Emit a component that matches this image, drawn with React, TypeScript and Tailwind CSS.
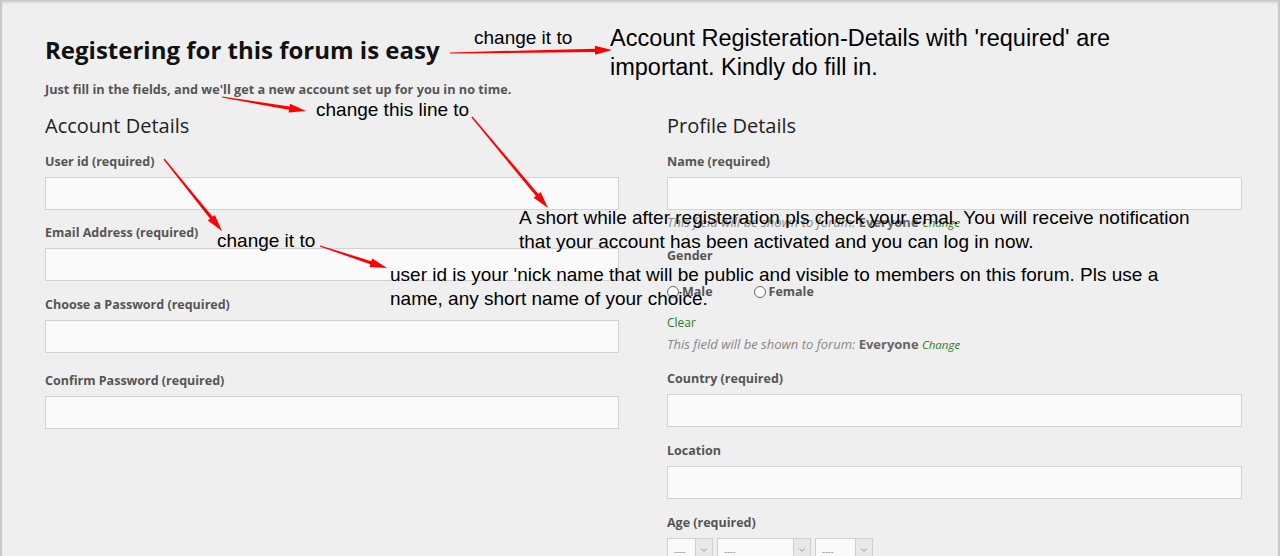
import React from "react";
import { ChevronDown } from "lucide-react";

const formFont = { fontFamily: '"Open Sans", "DejaVu Sans", sans-serif' };
const noteFont = { fontFamily: '"Liberation Sans", Arial, sans-serif' };

// red annotation arrow, tapered shaft with a triangle head
const Arrow = ({ x1, y1, x2, y2 }: { x1: number; y1: number; x2: number; y2: number }) => {
  const dx = x2 - x1;
  const dy = y2 - y1;
  const len = Math.sqrt(dx * dx + dy * dy);
  const ux = dx / len;
  const uy = dy / len;
  const nx = -uy;
  const ny = ux;
  const head = 17;
  const bx = x2 - ux * head;
  const by = y2 - uy * head;
  const p = (x: number, y: number) => `${x.toFixed(1)},${y.toFixed(1)}`;
  const pts = [
    p(x1 + nx * 0.6, y1 + ny * 0.6),
    p(bx + nx * 1.6, by + ny * 1.6),
    p(bx + nx * 4.5, by + ny * 4.5),
    p(x2, y2),
    p(bx - nx * 4.5, by - ny * 4.5),
    p(bx - nx * 1.6, by - ny * 1.6),
    p(x1 - nx * 0.6, y1 - ny * 0.6),
  ].join(" ");
  return <polygon points={pts} fill="#ff0000" />;
};

const Label = ({ children, className = "" }: { children: React.ReactNode; className?: string }) => (
  <div className={`text-[12.5px] font-bold leading-[14px] text-[#555] ${className}`}>{children}</div>
);

const TextBox = ({ className = "" }: { className?: string }) => (
  <div className={`h-[33px] w-full border border-[#d2d2d2] bg-[#fafafa] ${className}`} />
);

const Visibility = ({ className = "" }: { className?: string }) => (
  <div className={`h-[14px] text-[13px] leading-[14px] ${className}`}>
    <span className="italic text-[#888]">This field will be shown to forum: </span>
    <span className="font-bold text-[#666]">Everyone</span>{" "}
    <span className="text-[11.5px] italic text-[#2e7d1e]">Change</span>
  </div>
);

const Select = ({ width }: { width: string }) => (
  <div className={`flex h-[24px] ${width} border border-[#cfcfcf] bg-[#fafafa]`}>
    <div className="flex-1 pl-[6px] pt-[8px] text-[9px] leading-[10px] text-[#888]">----</div>
    <div className="flex w-[17px] items-start justify-center border-l border-[#cfcfcf] bg-[#e8e8e8] pt-[6px]">
      <ChevronDown size={10} strokeWidth={1.5} className="text-[#666]" />
    </div>
  </div>
);

const Radio = ({ label }: { label: string }) => (
  <div className="flex items-center gap-[3px]">
    <span className="h-[12px] w-[12px] rounded-full border border-[#666] bg-white" />
    <span className="text-[12.5px] font-bold text-[#555]">{label}</span>
  </div>
);

export default function App() {
  return (
    <div className="relative h-[556px] w-full overflow-hidden border-l-2 border-r-2 border-[#c9c9c9] bg-[#efefef] shadow-[inset_0_3px_3px_-1px_rgba(0,0,0,0.18)]">
      <div className="pl-[43px] pt-[35px]" style={formFont}>
        <h1 className="text-[24px] font-bold leading-[30px] text-[#111]">Registering for this forum is easy</h1>
        <p className="mt-[17px] text-[12.7px] font-bold leading-[14px] text-[#555]">
          Just fill in the fields, and we'll get a new account set up for you in no time.
        </p>

        <div className="mt-[16px] grid w-[1197px] grid-cols-[574px_575px] gap-x-[48px]">
          {/* account details */}
          <div>
            <h2 className="text-[20px] leading-[28px] text-[#222]">Account Details</h2>
            <Label className="mt-[15px]">User id (required)</Label>
            <TextBox className="mt-[8px]" />
            <Label className="mt-[16px]">Email Address (required)</Label>
            <TextBox className="mt-[8px]" />
            <Label className="mt-[17px]">Choose a Password (required)</Label>
            <TextBox className="mt-[8px]" />
            <Label className="mt-[21px]">Confirm Password (required)</Label>
            <TextBox className="mt-[8px]" />
          </div>

          {/* profile details */}
          <div>
            <h2 className="text-[20px] leading-[28px] text-[#222]">Profile Details</h2>
            <Label className="mt-[15px]">Name (required)</Label>
            <TextBox className="mt-[8px]" />
            <Visibility className="mt-[5px]" />
            <Label className="mt-[20px]">Gender</Label>
            <div className="mt-[21px] flex h-[16px] items-center gap-[41px]">
              <Radio label="Male" />
              <Radio label="Female" />
            </div>
            <div className="mt-[15px] text-[12px] leading-[16px] text-[#2e7d1e]">Clear</div>
            <Visibility className="mt-[6px]" />
            <Label className="mt-[21px]">Country (required)</Label>
            <TextBox className="mt-[8px]" />
            <Label className="mt-[17px]">Location</Label>
            <TextBox className="mt-[8px]" />
            <Label className="mt-[17px]">Age (required)</Label>
            <div className="mt-[8px] flex gap-[4px]">
              <Select width="w-[46px]" />
              <Select width="w-[94px]" />
              <Select width="w-[58px]" />
            </div>
          </div>
        </div>
      </div>

      {/* annotations drawn on top of the screenshot */}
      <svg className="pointer-events-none absolute -left-[2px] top-0" width="1280" height="556">
        <Arrow x1={450} y1={53} x2={612} y2={50} />
        <Arrow x1={222} y1={97} x2={306} y2={111} />
        <Arrow x1={472} y1={117} x2={548} y2={208} />
        <Arrow x1={164} y1={159} x2={222} y2={231} />
        <Arrow x1={320} y1={246} x2={387} y2={268} />
      </svg>
      <div className="absolute left-[472px] top-[27px] whitespace-nowrap text-[19px] leading-[22px] text-black" style={noteFont}>
        change it to
      </div>
      <div className="absolute left-[608px] top-[24px] whitespace-nowrap text-[23.5px] leading-[29px] text-black" style={noteFont}>
        Account Registeration-Details with 'required' are
        <br />
        important. Kindly do fill in.
      </div>
      <div className="absolute left-[314px] top-[99px] whitespace-nowrap text-[19px] leading-[22px] text-black" style={noteFont}>
        change this line to
      </div>
      <div className="absolute left-[517px] top-[206px] whitespace-nowrap text-[19px] leading-[24px] text-black" style={noteFont}>
        A short while after registeration pls check your emal. You will receive notification
        <br />
        that your account has been activated and you can log in now.
      </div>
      <div className="absolute left-[215px] top-[230px] whitespace-nowrap text-[19px] leading-[22px] text-black" style={noteFont}>
        change it to
      </div>
      <div className="absolute left-[388px] top-[263px] whitespace-nowrap text-[19px] leading-[24px] text-black" style={noteFont}>
        user id is your 'nick name that will be public and visible to members on this forum. Pls use a
        <br />
        name, any short name of your choice.
      </div>
    </div>
  );
}
